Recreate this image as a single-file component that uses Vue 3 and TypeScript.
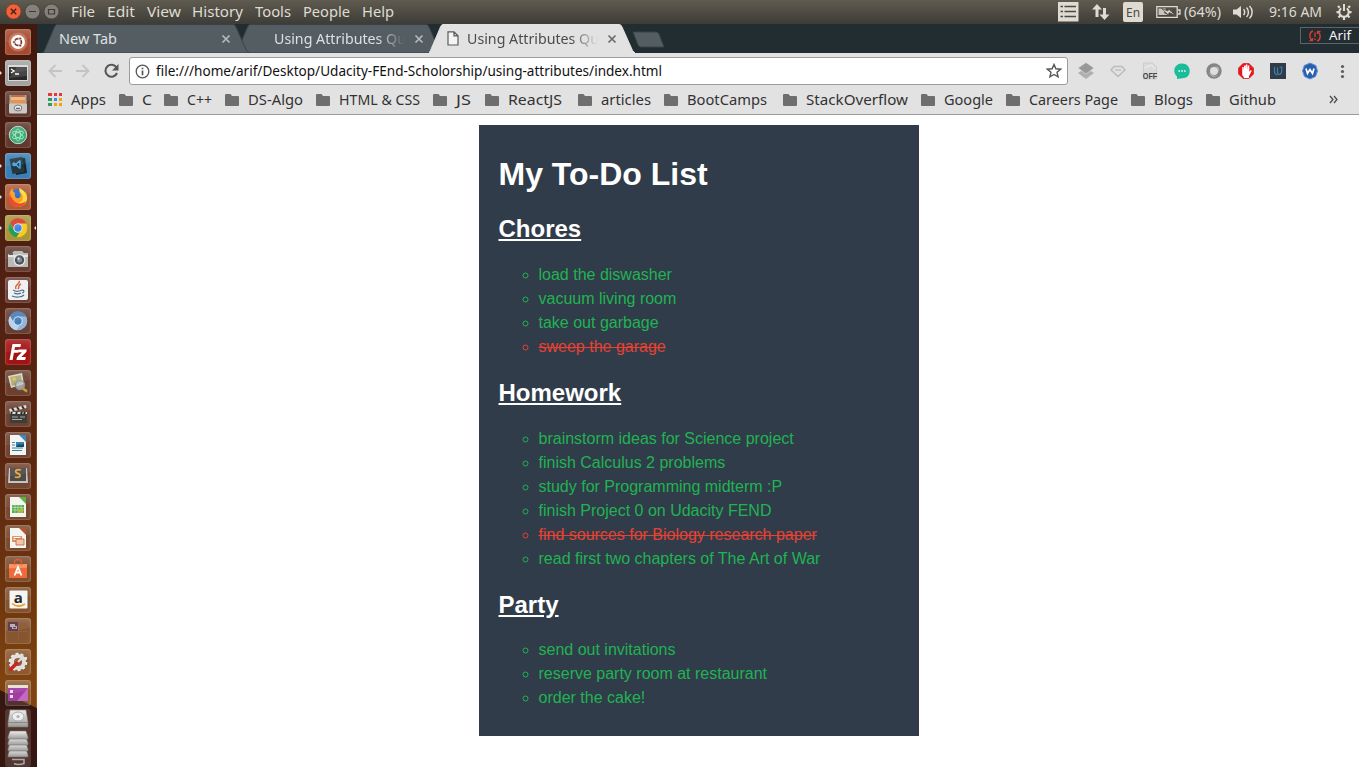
<script setup lang="ts">
import { h, type FunctionalComponent } from 'vue'

// A text run set to a fixed advance width
const Label: FunctionalComponent<{ text: string; w: number; size?: number }> = (p) =>
  h('svg', { class: 'label', width: p.w, height: 20 }, [
    h('text', { x: 0, y: 15, 'font-size': p.size ?? 14, textLength: p.w, lengthAdjust: 'spacingAndGlyphs', fill: 'currentColor' }, p.text),
  ])
Label.props = ['text', 'w', 'size']

interface Run { text: string; w: number }
interface Bookmark extends Run { slot: number }
interface Todo { text: string; done?: boolean }
interface Group { title: string; items: Todo[] }

const menus: Run[] = [
  { text: 'File', w: 24 }, { text: 'Edit', w: 28 }, { text: 'View', w: 34 }, { text: 'History', w: 51 },
  { text: 'Tools', w: 36 }, { text: 'People', w: 47 }, { text: 'Help', w: 32 },
]

const tabs = [
  { text: 'New Tab', w: 58, active: false },
  { text: 'Using Attributes Qu', w: 132, active: false },
  { text: 'Using Attributes Qu', w: 132, active: true },
]

const bookmarks: Bookmark[] = [
  { text: 'C', w: 10, slot: 45 }, { text: 'C++', w: 25, slot: 61 }, { text: 'DS-Algo', w: 55, slot: 91 },
  { text: 'HTML & CSS', w: 81, slot: 117 }, { text: 'JS', w: 15, slot: 52 }, { text: 'ReactJS', w: 54, slot: 93 },
  { text: 'articles', w: 50, slot: 86 }, { text: 'BootCamps', w: 80, slot: 119 }, { text: 'StackOverflow', w: 102, slot: 138 },
  { text: 'Google', w: 49, slot: 85 }, { text: 'Careers Page', w: 89, slot: 125 }, { text: 'Blogs', w: 39, slot: 75 },
  { text: 'Github', w: 47, slot: 75 },
]

const appDots = ['#e53935', '#e53935', '#e53935', '#2e9e5b', '#4285f4', '#f4a400', '#2e9e5b', '#f4a400', '#f4a400']

const launcher = [
  'dash', 'terminal', 'files', 'atom', 'code', 'firefox', 'chrome', 'camera', 'java', 'chromium', 'filezilla',
  'viewer', 'video', 'writer', 'sublime', 'calc', 'impress', 'software', 'amazon', 'workspace', 'settings', 'desktop',
]
const tileColors: Record<string, string> = {
  dash: '#a44a30', terminal: '#a5a3a2', code: '#397fb4', firefox: '#ae5c38', chrome: '#a8953c', filezilla: '#a31313',
}
const running = new Set(['terminal', 'code', 'firefox', 'chrome'])

const groups: Group[] = [
  { title: 'Chores', items: [
    { text: 'load the diswasher' }, { text: 'vacuum living room' }, { text: 'take out garbage' },
    { text: 'sweep the garage', done: true },
  ] },
  { title: 'Homework', items: [
    { text: 'brainstorm ideas for Science project' }, { text: 'finish Calculus 2 problems' },
    { text: 'study for Programming midterm :P' }, { text: 'finish Project 0 on Udacity FEND' },
    { text: 'find sources for Biology research paper', done: true },
    { text: 'read first two chapters of The Art of War' },
  ] },
  { title: 'Party', items: [
    { text: 'send out invitations' }, { text: 'reserve party room at restaurant' }, { text: 'order the cake!' },
  ] },
]
</script>

<template>
  <div class="screen">
    <header class="panel">
      <svg class="winbtns" width="60" height="24">
        <circle cx="13.5" cy="11.5" r="7.5" fill="#f0623a" stroke="#8a3a22" stroke-width=".7" />
        <path d="M10.8 8.8l5.4 5.4m0-5.4l-5.4 5.4" stroke="#4b2013" stroke-width="1.4" />
        <g fill="#85817a" stroke="#3b3934" stroke-width=".7"><circle cx="32.5" cy="11.5" r="7.5" /><circle cx="51.5" cy="11.5" r="7.5" /></g>
        <path d="M29 11.5h7M48.500 9.500h6v4.500h-6z" fill="none" stroke="#3c3b37" stroke-width="1.2" />
      </svg>
      <nav class="menus"><Label v-for="m in menus" :key="m.text" :text="m.text" :w="m.w" /></nav>
      <div class="status">
        <svg width="21" height="24"><path d="M0 2h20.500v19.500H0z" fill="#dfdbd2" /><path d="M2.500 6.500H5m1.500 0H18M2.500 11.500H5m1.500 0H18M2.500 16.500H5m1.500 0H18" stroke="#4b4943" stroke-width="1.500" /></svg>
        <svg class="s-net" width="18" height="24"><path d="M5 4L0 9.500h3.500V17h3V9.500H10zM12.500 20L7.500 14.500H11V8h3v6.500h3.500z" fill="#dfdbd2" /></svg>
        <span class="lang"><Label text="En" :w="14" :size="13" /></span>
        <svg class="s-bat" width="25" height="24"><path d="M.8 6.700h20.400v10.600H.8zM22 10h2v4h-2" fill="none" stroke="#dfdbd2" stroke-width="1.300" /><path d="M2.500 8.500H10L8 13l4 2H2.500z" fill="#dfdbd2" opacity=".85" /><path d="M5.500 8.500l6.500 2.500.5-2 7 6.500-6.500-3-.5 2.500z" fill="#dfdbd2" stroke="#4b4943" stroke-width=".7" /></svg>
        <span class="s-pct"><Label text="(64%)" :w="37" /></span>
        <svg class="s-vol" width="21" height="24" fill="none" stroke="#dfdbd2" stroke-width="1.500"><path d="M0 9.500h3.500L8 6v12l-4.500-3.500H0z" fill="#dfdbd2" stroke="none" /><path d="M10.500 9.200c1.600 1.500 1.600 4.300 0 5.800M13.500 7.500c2.600 2.500 2.600 7 0 9.500M16.500 6c3.500 3.300 3.500 9.200 0 12.500" /></svg>
        <span class="s-time"><Label text="9:16 AM" :w="53" /></span>
        <svg class="s-gear" width="16" height="24" fill="none" stroke="#dfdbd2"><path d="M5.200 8.300a4.700 4.700 0 1 0 5.600 0M8 4v7" stroke-width="2" /><path d="M3.600 7.600L2 6M12.400 7.600L14 6M3 12.200H.500M13 12.200h2.500M4.300 15.600L2.500 17.500M11.700 15.600l1.800 1.900M8 17v3" stroke-width="2.200" /></svg>
      </div>
    </header>

    <div class="body">
      <aside class="launcher">
        <div v-for="name in launcher" :key="name" class="slot">
          <i v-if="running.has(name)" class="pip" />
          <i v-if="name === 'chrome'" class="pip focus" />
          <svg class="tile" :style="{ backgroundColor: tileColors[name] }" viewBox="0 0 26 26" width="26" height="26">
            <g v-if="name === 'dash'"><circle cx="13" cy="13" r="9.500" fill="#d38a70" opacity=".6" /><circle cx="13" cy="13" r="7" fill="#fff" /><circle cx="13" cy="13" r="3.400" fill="none" stroke="#7c3524" stroke-width="1.700" /><g fill="#7c3524" stroke="#fff" stroke-width=".8"><circle cx="9" cy="13" r="1.500" /><circle cx="15.200" cy="9.500" r="1.500" /><circle cx="15.200" cy="16.500" r="1.500" /></g></g>
            <g v-else-if="name === 'terminal'"><path d="M3 5h20v16H3z" fill="#d8d8d8" /><path d="M4 7h18v13H4z" fill="#292929" /><path d="M12 7h10v9L4 18z" fill="#464646" /><path d="M6 9l3 2-3 2m4 1h4" fill="none" stroke="#fff" stroke-width="1.300" /></g>
            <g v-else-if="name === 'files'"><path d="M6 4h14l2 9H4z" fill="#bd643a" /><path d="M6 6h14v3H6z" fill="#eab57d" /><path d="M6 9h14v4H6z" fill="#e08c4a" /><path d="M4.500 4H6v9h14V4h1.500v10h-17z" fill="#aaa197" /><rect x="4" y="12.500" width="18" height="10" rx="1.500" fill="#cbc9c7" /><ellipse cx="13" cy="17" rx="3.800" ry="3" fill="#ece9e5" stroke="#777" /><path d="M11 17.500h4" stroke="#666" stroke-width="1.500" /></g>
            <g v-else-if="name === 'atom'"><circle cx="13" cy="13" r="8.700" fill="#3dac78" stroke="#c9d6cc" stroke-width="1" /><g fill="none" stroke="#b8f0cf" stroke-width=".7"><ellipse cx="13" cy="13" rx="2.500" ry="6" /><ellipse cx="13" cy="13" rx="2.500" ry="6" transform="rotate(60 13 13)" /><ellipse cx="13" cy="13" rx="2.500" ry="6" transform="rotate(120 13 13)" /></g></g>
            <g v-else-if="name === 'code'"><path d="M9 6l11-1 2 15-11 2z" fill="#17252d" /><path d="M4.500 6l13-2 2 15-12 2z" fill="#273740" /><path d="M15 7.500l-5.500 5-2-1m7.500 4l-6-5.500-1.500 1.500M15 7.500v8" fill="none" stroke="#45a8e6" stroke-width="1.500" /></g>
            <g v-else-if="name === 'firefox'"><circle cx="13.500" cy="13.500" r="8.500" fill="#2669d2" /><path d="M10 9c-2-1-3-3-2-5-5 3-6 15 2 18 9 3 15-8 10-15 1 4-1 5-1 5-2-3-3-4-5-7 0 4 3 5 1 8-3 3-6 0-5-4z" fill="#fa9f22" /><path d="M14 4l1 4c5 4 3 10-2 11-5 0-8-3-8-6-1 6 3 10 8 10 11-1 13-14 1-19z" fill="#ffdc38" /><path d="M5 9c-3 6 0 14 8 14 4 0 7-3 8-6-6 5-14 2-16-8z" fill="#ef492f" /></g>
            <g v-else-if="name === 'chrome' || name === 'chromium'"><circle cx="13" cy="13" r="9.300" :fill="name === 'chrome' ? '#f9c924' : '#92b5dc'" /><path d="M5 8a9.300 9.300 0 0 1 16.500 0.600H13A4.500 4.500 0 0 0 9 15z" :fill="name === 'chrome' ? '#dc3e31' : '#4e7fb9'" /><path d="M5 8l4.500 8a4.400 4.400 0 0 0 5 1.400L11.500 22.200A9.300 9.300 0 0 1 5 8z" :fill="name === 'chrome' ? '#22a156' : '#b9d2ed'" /><circle cx="13" cy="13" r="4.600" fill="#eee" /><circle cx="13" cy="13" r="3.700" :fill="name === 'chrome' ? '#4386e8' : '#417bb8'" /></g>
            <g v-else-if="name === 'camera'"><path d="M3 8l4-1 2-2h8l2 2h4v14H3z" fill="#b9b9b8" /><path d="M3 9h20v2H3z" fill="#e3e3e1" /><circle cx="14.500" cy="14" r="6" fill="#e8e8e7" /><circle cx="14.500" cy="14" r="4.700" fill="#4a5159" /><circle cx="14.500" cy="14" r="2.500" fill="#838f9d" /><circle cx="13.500" cy="12.500" r="1" fill="#fff" /><path d="M4 7h4v2H4z" fill="#555" /></g>
            <g v-else-if="name === 'java'"><rect x="3" y="3" width="20" height="20" rx="2" fill="#eef0f1" /><path d="M14 4c2 3-5 3-3 8m5-5c-4 2-1 3-3 5" stroke="#d45d2c" stroke-width="1.500" fill="none" /><path d="M8 13c3 2 7 1 9 0m-8 3c2 1 5 1 7 0M7 19c4 2 10 1 12-1m-2-5c3 0 2 3 0 3" stroke="#4f708c" stroke-width="1.200" fill="none" /></g>
            <g v-else-if="name === 'filezilla'"><path d="M4.500 21L7.500 5H16l-.6 3H10l-.6 3h4.500l-.6 2.800H8.900L7.600 21z" fill="#fff" /><path d="M13.500 10.500h8.300l-.5 2.600-5 5h4.500l-.6 2.900h-8.800l.6-2.800 4.800-5h-3.700z" fill="#fff" /></g>
            <g v-else-if="name === 'viewer'"><path d="M3 6l14-3 2 11-13 4z" fill="#ddd9c8" /><path d="M5 7l11-2 1 8-10 3z" fill="#a8aa78" /><circle cx="9" cy="9" r="2" fill="#e0bc54" /><circle cx="15" cy="15" r="4.500" fill="#bdc8ca" fill-opacity=".7" stroke="#8f908e" stroke-width="1.500" /><path d="M18 18.500l4 3" stroke="#c6a134" stroke-width="2.500" /></g>
            <g v-else-if="name === 'video'"><path d="M5 12h17v10H5z" fill="#3d3d3a" /><path d="M4 8l17-4 .5 3L5 11z" fill="#ddd" /><path d="M7 7l2 3m3-4l2 3m3-4l2 3" stroke="#232320" stroke-width="2" /><path d="M5 11h17v2H5z" fill="#ddd" /><path d="M7 11l-1 2m6-2l-1 2m6-2l-1 2m4-2l-1 2" stroke="#222" stroke-width="2" /><path d="M7 16h6m2 0h5M7 18.500h10" stroke="#aaa" stroke-width="1" /></g>
            <g v-else-if="name === 'writer' || name === 'calc' || name === 'impress'"><path d="M5 3h11l5 5v15H5z" fill="#f4f4f1" /><path d="M14 3h7v7z" :fill="name === 'writer' ? '#2a84b9' : name === 'calc' ? '#4caf35' : '#a94c25'" /><template v-if="name === 'writer'"><path d="M11 10h8v5h-8z" fill="#247ba8" /><path d="M11 15l3-3 2 1 3-1v3z" fill="#1b4a60" /><path d="M7 10.500h3M7 13h3M7 16h11M7 18.500h10" stroke="#2c84aa" stroke-width="1" /></template><template v-else-if="name === 'calc'"><path d="M7 11h12v8H7z" fill="#58ad48" /><path d="M7 13.500h12M7 16h12M10 11v8m3-8v8m3-8v8" stroke="#e3f3dc" stroke-width=".5" /><path d="M13 19v-3h2v3m1 0v-5h2v5" fill="#c9b23c" /></template><template v-else><path d="M7 11h10v6H7z" fill="#e09162" /><path d="M8.500 12.500h7m-7 2h5" stroke="#fff" /><path d="M11 14h8v6h-8z" fill="#f3c6a7" stroke="#bd623d" stroke-width=".8" /></template></g>
            <g v-else-if="name === 'sublime'"><path d="M4 5h18l1 15H3z" fill="#c4c4c2" /><path d="M5 5h16v13H5z" fill="#4b4b49" /><path d="M16 7c-4.500-1.200-6.500.8-4.500 2.900l2.800 1.200c2.200 2.100-.6 4.200-4.500 2.900" stroke="#eea13f" stroke-width="1.800" fill="none" /></g>
            <g v-else-if="name === 'software'"><path d="M4 8h18v14H4z" fill="#f06a38" /><path d="M4 8h18v4H4z" fill="#fb8b55" /><path d="M9.500 9V6.500Q9.500 3.500 13 3.500t3.500 3V9" fill="none" stroke="#d9532a" stroke-width="1.300" /><path d="M9.500 19.500L13 11l3.500 8.500m-5.500-3h4" stroke="#fff" stroke-width="1.800" fill="none" /></g>
            <g v-else-if="name === 'amazon'"><rect x="4.500" y="3.500" width="18" height="18" rx="1" fill="#f5f5f1" /><text x="13.400" y="15.500" text-anchor="middle" class="amz">a</text><path d="M7 16.500c4 3.500 9 3 13 .5" stroke="#f29a26" stroke-width="1.600" fill="none" /></g>
            <g v-else-if="name === 'workspace'"><path d="M3 4h10v10H3z" fill="#573141" /><path d="M13.500 4v19M3 13.500h20" stroke="#8d5c45" stroke-width="1" /><path d="M5 6h5v2h2v3H7V9H5z" fill="#b7a8ac" /><path d="M8 9h3v1.200H8z" fill="#51404b" /></g>
            <g v-else-if="name === 'settings'"><circle cx="13" cy="13" r="6" fill="none" stroke="#dedede" stroke-width="4" /><circle cx="13" cy="13" r="8.300" fill="none" stroke="#e8e8e8" stroke-width="2" stroke-dasharray="3 2.200" /><path d="M5.500 20.500l8-8" stroke="#c72626" stroke-width="3.500" stroke-linecap="round" /><path d="M13 13l5-5m-1-3v4h5" stroke="#ddd" stroke-width="2" fill="none" /></g>
            <g v-else><path d="M3 5h20v16H3z" fill="#a13ca3" /><path d="M12 21l11-13v13z" fill="#c469bf" /><path d="M3 5h20v3H3z" fill="#e4e0d4" /><path d="M5 10h3v3H5zm0 5h3v3H5z" fill="#eadeea" /></g>
            <path d="M0 0h26v9Q13 14 0 13z" fill="#fff" opacity=".07" />
          </svg>
        </div>
        <svg class="drives" width="37" height="60">
          <defs><linearGradient id="metal" x1="0" y1="0" x2="0" y2="1"><stop offset="0" stop-color="#eee" /><stop offset="1" stop-color="#9a9a98" /></linearGradient></defs>
          <rect x="5" y="0" width="26" height="58" rx="3" fill="#fff" opacity=".14" />
          <g stroke="#77736f" stroke-width=".6" fill="url(#metal)">
            <path d="M10 40h16l2 6v2H8v-2z" /><path d="M10 34h16l2 6v2H8v-2z" /><path d="M10 28h16l2 6v2H8v-2z" /><path d="M10 22h16l2 6v2H8v-2z" />
            <path d="M10 1h16l2 12v5H8v-5z" />
          </g>
          <ellipse cx="18" cy="7.500" rx="6" ry="4.500" fill="#eee" stroke="#aaa" /><circle cx="18" cy="7.500" r="1.500" fill="#aaa" />
          <path d="M8 13.500h20" stroke="#888" />
          <path d="M12 50.500h12v4q-6 2-10 0" fill="none" stroke="#aaa" stroke-width="1.500" />
        </svg>
      </aside>

      <section class="browser">
        <div class="strip">
          <div v-for="(t, i) in tabs" :key="i" class="tab" :class="{ active: t.active, plain: i === 0 }">
            <svg class="shape" width="206" height="29"><path d="M0 29L1.500 26.500 11.500 3Q12.500 .5 14 .5H190.500Q192 .5 193 3L203.500 26.500 206 29z" /></svg>
            <svg v-if="i > 0" class="page-icon" width="12" height="15"><path v-if="t.active" d="M1 .8h6l4 4v9.200H1zM7 .8v4h4" fill="#f4f4f4" stroke="#5a5a5a" stroke-width="1.200" /></svg>
            <span class="tab-title"><Label :text="t.text" :w="t.w" /></span>
            <svg class="close" width="10" height="10"><path d="M1.500 1.500l7 7m0-7l-7 7" stroke="currentColor" stroke-width="1.700" /></svg>
          </div>
          <svg class="newtab" width="33" height="17"><path d="M1 1h23q2 0 3 2l5 13H9q-2 0-3-2z" fill="#545d61" stroke="#39444a" /></svg>
          <div class="profile">
            <svg width="14" height="12" fill="none" stroke="#d33c31" stroke-width="1.400"><path d="M5 1C1 2 1 8 4 10M1.500 10.500h3V8M9 11c4-1 4-7 1-9m2.500-.5h-3V4M7 2.500v4.500m0 1.500V10" /></svg>
            <Label text="Arif" :w="22" :size="13" />
          </div>
        </div>

        <div class="toolbar">
          <svg class="nav" width="92" height="31" fill="none" stroke="#c4c4c4" stroke-width="1.900"><path d="M25 18H12.500M18.500 12l-6 6 6 6M39 18h12.500M45.500 12l6 6-6 6" /><path d="M79.500 14.500A6 6 0 1 0 80 20" stroke="#565656" stroke-width="2.100" /><path d="M81.500 11v6.500H75z" fill="#565656" stroke="none" /></svg>
          <div class="omnibox">
            <svg width="15" height="15" fill="none" stroke="#555" stroke-width="1.300"><circle cx="7.500" cy="7.500" r="6.300" /><path d="M7.500 6.500v4.700M7.500 3.700v1.600" stroke-width="1.700" /></svg>
            <Label text="file:///home/arif/Desktop/Udacity-FEnd-Scholorship/using-attributes/index.html" :w="506" />
            <svg class="star" width="16" height="16"><path d="M8 1.500l1.900 4.300 4.700.4-3.600 3.100 1.100 4.600L8 11.500l-4.100 2.400L5 9.300 1.400 6.200l4.700-.4z" fill="none" stroke="#555" stroke-width="1.400" /></svg>
          </div>
          <div class="exts">
            <svg viewBox="0 0 20 20"><path d="M10 7l8 5-8 6-8-6z" fill="#b0b0b0" /><path d="M10 1.500l8 5.500-8 6-8-6z" fill="#989898" stroke="#e2e2e2" stroke-width=".6" /></svg>
            <svg viewBox="0 0 20 20"><path d="M6 5.500h8l3 3.500-7 6.500L3 9z" fill="none" stroke="#bcbcbc" stroke-width="1.500" /><path d="M7 9h6" stroke="#bcbcbc" stroke-width="1.300" /></svg>
            <svg viewBox="0 0 20 20"><path d="M3.500 2h9l4 4v12h-13z" fill="#dadada" stroke="#c4c4c4" stroke-width=".7" /><path d="M4.500 7l7-3 4 4" stroke="#f2f2f2" fill="none" /><text x="10" y="17.500" text-anchor="middle" class="off" textLength="14.500" lengthAdjust="spacingAndGlyphs">OFF</text></svg>
            <svg viewBox="0 0 20 20"><path d="M10 2.500c10 0 10 14 2 14.500L5 18v-2.500C0 11 2 2.500 10 2.500z" fill="#1bbd98" /><path d="M6.500 10h1.500m1.300 0h1.500m1.300 0h1.500" stroke="#fff" stroke-width="1.500" /></svg>
            <svg viewBox="0 0 20 20"><circle cx="10" cy="10" r="7.700" fill="#858585" /><circle cx="10" cy="10" r="4" fill="#dedede" /><path d="M3.500 7c1 7 6 9 10.500 7-3 3-9 3-10.500-7zM10 6c4 0 5 3 4 6 3-4 0-8-4-6z" fill="#b8b8b8" /></svg>
            <svg viewBox="0 0 20 20"><path d="M7 2.500h6l4.500 4.500v6L13 17.500H7L2.500 13V7z" fill="#e9151e" stroke="#c9141a" stroke-width=".6" /><path d="M6.200 9V6h1.400v4l.5-5.500h1.500V9l.3-5.500h1.500V9l.5-4.500h1.400v6.200l1.500-1.700 1 .7-2.800 5.300v2H8.200l-2-3z" fill="#fff" /></svg>
            <svg viewBox="0 0 20 20"><path d="M2 2h16v16H2z" fill="#303c49" /><path d="M6.500 6v4.500q0 3 3 3.300M9.500 6.500v4q0 3 2 3c2.500-.5 2.500-3.500 2.200-7.500h-2" fill="none" stroke="#3d7fab" stroke-width="1.200" /></svg>
            <svg viewBox="0 0 20 20"><path d="M10 2l5.800 2.500L17.500 10l-2 5.500L10 18l-5.500-2.500L2.500 10l1.800-5.500z" fill="#2a5fae" stroke="#5b91d8" stroke-width="1" /><path d="M6 7.500l1.500 5 2.500-4 2.500 4 1.500-5" fill="none" stroke="#fff" stroke-width="1.700" /></svg>
            <svg viewBox="0 0 20 20" fill="#5c5c5c"><circle cx="10.500" cy="5.500" r="1.600" /><circle cx="10.500" cy="10.500" r="1.600" /><circle cx="10.500" cy="15.500" r="1.600" /></svg>
          </div>
        </div>

        <div class="bookmarks">
          <span class="apps-grid"><i v-for="(c, i) in appDots" :key="i" :style="{ background: c }" /></span>
          <span class="apps-label"><Label text="Apps" :w="35" /></span>
          <div v-for="b in bookmarks" :key="b.text" class="bm" :style="{ width: b.slot + 'px' }">
            <svg width="14" height="12"><path d="M1 0h4.500L7 2h6q1 0 1 1v8q0 1-1 1H1q-1 0-1-1V1q0-1 1-1z" fill="#6e6e6e" /></svg>
            <Label :text="b.text" :w="b.w" />
          </div>
          <svg class="more" width="10" height="9" fill="none" stroke="#4b4b4b" stroke-width="1.300"><path d="M1 1l3 3.500-3 3.500M5 1l3 3.500-3 3.500" /></svg>
        </div>

        <main class="page">
          <article class="todo">
            <h1>My To-Do List</h1>
            <template v-for="g in groups" :key="g.title">
              <h2>{{ g.title }}</h2>
              <ul><li v-for="t in g.items" :key="t.text" :class="{ done: t.done }">{{ t.text }}</li></ul>
            </template>
          </article>
        </main>
      </section>
    </div>
  </div>
</template>

<style>
html, body { margin: 0; overflow: hidden; background: #fff; }
.label { display: block; flex: none; overflow: visible; }
</style>

<style scoped>
.screen { width: 1359px; height: 767px; display: flex; flex-direction: column; overflow: hidden; font-family: "Noto Sans", "Open Sans", sans-serif; }
svg { display: block; flex: none; }
.panel { height: 24px; flex: none; display: flex; color: #dfdbd2; background: linear-gradient(#5f5b50, #3e3c37); }
.winbtns { margin-right: 11px; }
.menus { display: flex; gap: 11.8px; padding-top: 2px; }
.status { display: flex; margin-left: auto; padding-right: 7px; }
.s-net { margin-left: 13px; }
.lang { width: 20px; height: 20px; margin: 2px 0 0 13px; border-radius: 2px; background: #dfdbd2; color: #4b4943; display: flex; justify-content: center; }
.s-bat { margin-left: 13px; }
.s-pct { margin-left: 3px; padding-top: 2px; }
.s-vol { margin-left: 12px; }
.s-time { margin-left: 15px; padding-top: 2px; }
.s-gear { margin-left: 14px; }

.body { flex: 1; display: flex; min-height: 0; }
.launcher { width: 37px; flex: none; box-sizing: border-box; padding-top: 5px; background: linear-gradient(to bottom left, transparent 50%, #351610 51%) 0 666px / 37px 18px no-repeat, linear-gradient(#3a1610, #351610) 0 684px / 37px 70px no-repeat, linear-gradient(transparent 30%, #a05a1c 90%) 36px 0 / 1px 684px no-repeat, linear-gradient(#42190e, #4f1f12 30%, #5b2611 58%, #70370e 78%, #7e430f 88%); overflow: hidden; }
.slot { height: 31px; position: relative; padding-left: 5px; }
.tile { border-radius: 3px; background: rgba(255, 255, 255, .13); box-shadow: inset 0 0 0 1px rgba(255, 255, 255, .12), inset 0 3px 5px rgba(255, 255, 255, .14); }
.pip { position: absolute; left: 0; top: 11px; border: 2px solid transparent; border-left: 2px solid #ddd; border-right: 0; }
.pip.focus { left: 34px; border-right: 2px solid #ddd; border-left: 0; }
.drives { margin-top: -2px; }
.amz { font: bold 15px "Open Sans", sans-serif; fill: #222; }

.browser { flex: 1; min-width: 0; display: flex; flex-direction: column; }
.strip { height: 29px; flex: none; display: flex; background: #222d32; padding-left: 6px; position: relative; }
.tab { position: relative; width: 206px; height: 29px; margin-right: -13px; flex: none; display: flex; color: #dde0e1; }
.tab .shape { position: absolute; left: 0; top: 0; fill: #545d61; stroke: #37424a; stroke-width: 1; }
.tab.plain { z-index: 1; }
.tab.active { color: #4c4c4c; z-index: 2; }
.tab.active .shape { fill: #e2e2e2; stroke: #e2e2e2; }
.tab > :not(.shape) { position: relative; }
.page-icon { margin: 7px 8px 0 18px; }
.tab-title { width: 140px; padding-top: 5px; }
.plain .tab-title { margin-left: 16px; width: 162px; }
.tab:not(.plain) .tab-title { -webkit-mask-image: linear-gradient(to right, #000 104px, transparent 131px); mask-image: linear-gradient(to right, #000 104px, transparent 131px); }
.close { margin-top: 10px; color: #b5babc; }
.active .close { color: #6b6b6b; }
.newtab { margin: 7px 0 0 10px; }
.profile { box-sizing: border-box; width: 60px; height: 17px; margin: 3px -1px 0 auto; border: 1px solid #58666c; display: flex; align-items: center; padding-left: 7px; gap: 7px; color: #f4f4f4; }
.profile .label { margin-top: -2px; }

.toolbar { height: 31px; flex: none; display: flex; background: #e2e2e2; }
.omnibox { box-sizing: border-box; width: 939px; height: 28px; margin-top: 4px; border: 1px solid #9c9c9c; border-radius: 3px; background: #fff; display: flex; align-items: center; padding: 0 5px; gap: 6px; color: #111; position: relative; }
.omnibox > .label { margin-top: -1px; }
.star { margin-left: auto; }
.exts { display: flex; gap: 12px; padding: 8px 0 0 8px; }
.exts svg { width: 20px; height: 20px; }
.off { font: bold 8.5px "Liberation Sans", sans-serif; fill: #444; }

.bookmarks { height: 31px; box-sizing: border-box; padding: 1px 20px 0 11px; flex: none; display: flex; align-items: center; color: #333; background: #e2e2e2; border-bottom: 1px solid #9b9b9b; }
.apps-grid { display: grid; grid-template-columns: 4px 3px 3px; column-gap: 2px; row-gap: 2px; width: 14px; }
.apps-grid i { height: 3px; }
.apps-label { width: 48px; margin-left: 9px; }
.bm { display: flex; align-items: center; gap: 9px; flex: none; }
.more { margin-left: auto; }

.page { flex: 1; background: #fff; padding: 10px 0 0 441.5px; }
.todo { width: 400px; height: 591px; padding: 10px 20px; background: #303c49; color: #fff; font-family: "Liberation Sans", Arial, sans-serif; display: flow-root; }
h1 { font-size: 32px; margin: 21.440px 0; }
h2 { font-size: 24px; margin: 19.920px 0; text-decoration: underline; }
ul { margin: 16px 0; padding-left: 40px; list-style: circle; line-height: 24px; font-size: 16px; }
li { color: #21b353; }
li.done { color: #e74132; text-decoration: line-through; }
</style>
